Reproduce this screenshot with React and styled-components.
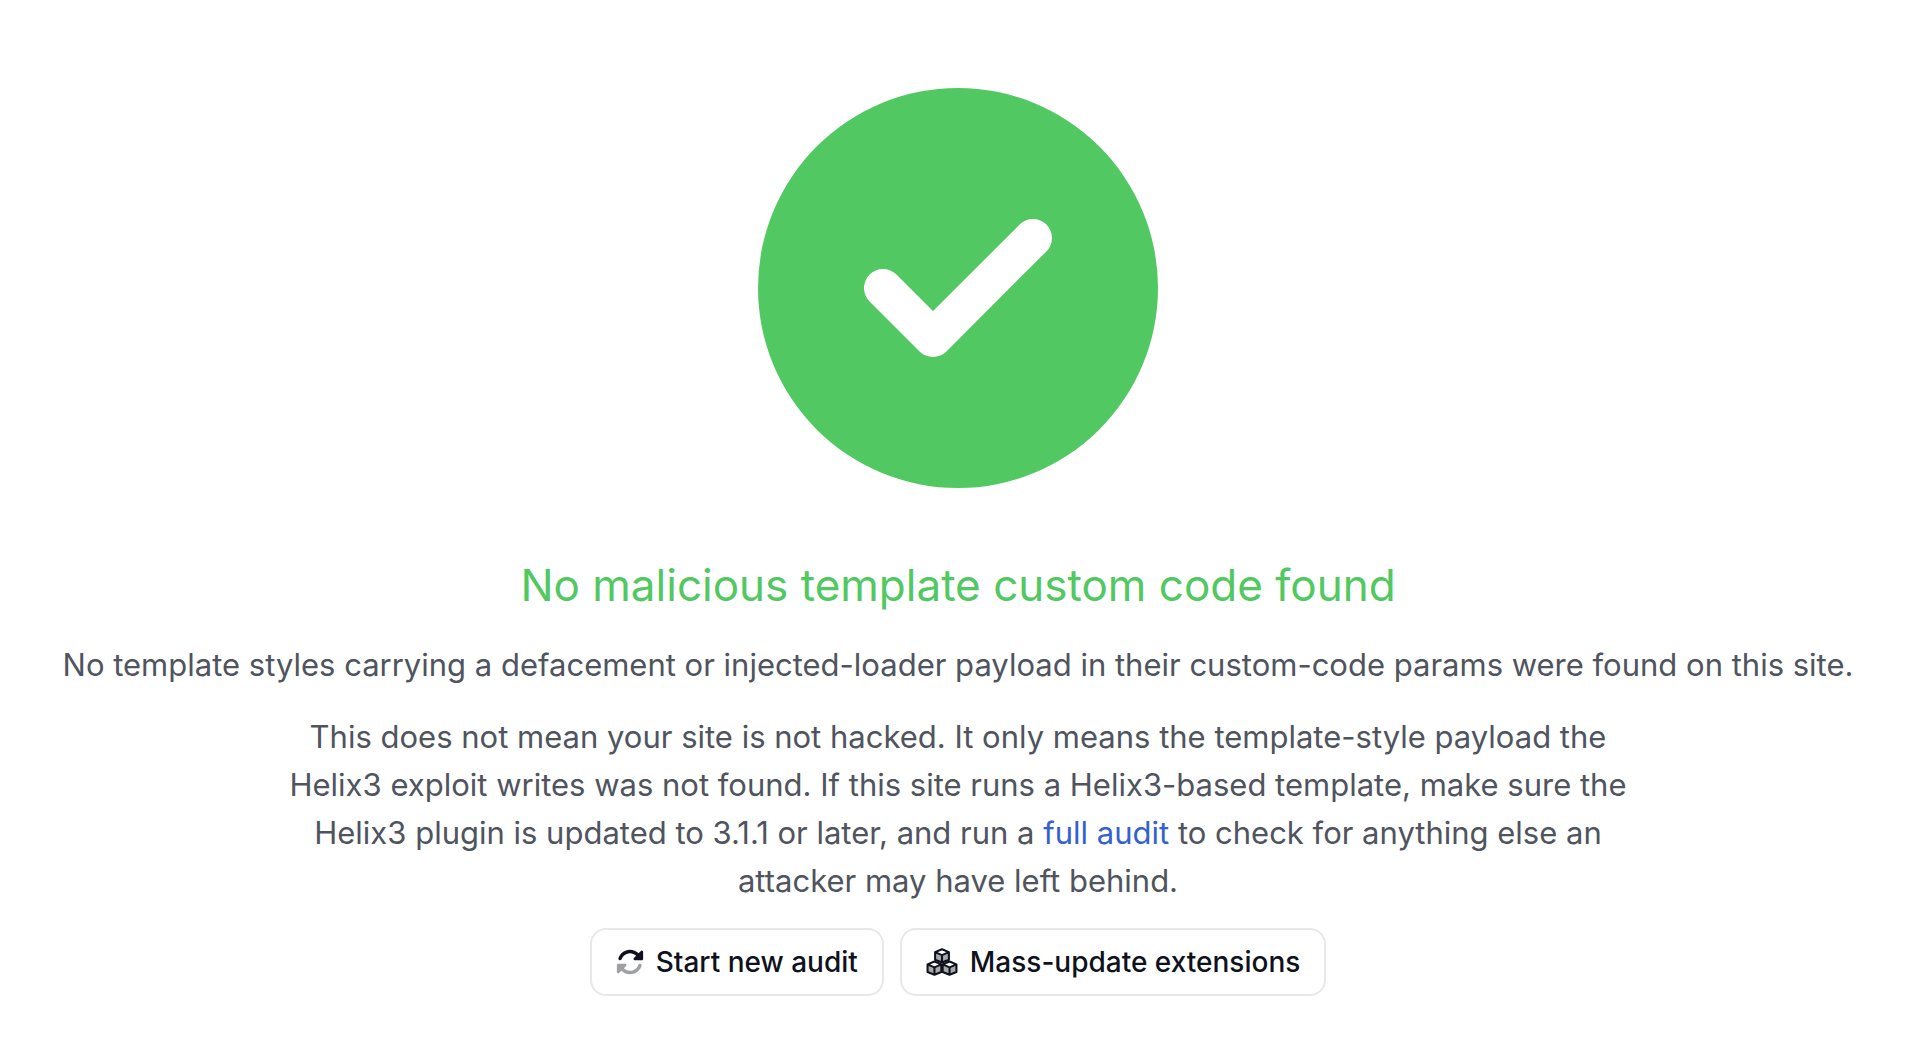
import styled, { createGlobalStyle } from "styled-components";

const COLOR = {
  green: "#52c862",
  text: "#4f545e",
  link: "#3461d1",
  border: "#e8e8ea",
  dark: "#0f121c",
};

const GlobalStyle = createGlobalStyle`
  body {
    margin: 0;
    background: #fff;
    font-family: Inter, "Liberation Sans", sans-serif;
  }
`;

const Page = styled.main`
  padding: 88px 32px 40px 24px;
  display: flex;
  flex-direction: column;
  align-items: center;
  text-align: center;
`;
const StatusIcon = styled.svg`
  width: 400px;
  height: 400px;
  display: block;
`;
const Title = styled.h1`
  margin: 66px 0 0;
  font-size: 44px;
  line-height: 63px;
  font-weight: 400;
  color: ${COLOR.green};
`;
const Text = styled.p`
  margin: 24px 0 0;
  max-width: ${({ $narrow }) => ($narrow ? "1344px" : "none")};
  font-size: 31px;
  line-height: 48px;
  color: ${COLOR.text};
`;
const Link = styled.a`
  color: ${COLOR.link};
  text-decoration: none;
`;
const Actions = styled.div`
  margin-top: 23px;
  display: flex;
  gap: 16px;
`;
const Button = styled.button`
  padding: 0 24px;
  height: 68px;
  display: flex;
  align-items: center;
  gap: 12px;
  border: 2px solid ${COLOR.border};
  border-radius: 16px;
  background: #fff;
  color: ${COLOR.dark};
  font-family: inherit;
  font-size: 28px;
  font-weight: 500;
  cursor: pointer;
`;
const Icon = styled.svg`
  width: ${({ $wide }) => ($wide ? "32px" : "28px")};
  height: 28px;
  flex-shrink: 0;
`;

// centers of the three stacked cubes
const CUBES = [
  [288, 144],
  [150, 368],
  [426, 368],
];

function RotateIcon() {
  return (
    <Icon viewBox="0 0 512 512" fill="currentColor" aria-hidden="true">
      <path d="M142.9 142.9c-17.5 17.5-30.1 38-37.8 59.8c-5.9 16.7-24.2 25.4-40.8 19.5s-25.4-24.2-19.5-40.8C55.6 150.7 73.2 122 97.6 97.6c87.2-87.2 228.3-87.5 315.8-1L455 55c6.9-6.9 17.2-8.9 26.2-5.2s14.8 12.5 14.8 22.2v128c0 13.3-10.7 24-24 24H344c-9.7 0-18.5-5.8-22.2-14.8s-1.7-19.3 5.2-26.2l41.1-41.1c-62.6-61.5-163.1-61.2-225.3 1z" />
      <path
        opacity="0.4"
        d="M16 312c0-13.3 10.7-24 24-24H168c9.7 0 18.5 5.8 22.2 14.8s1.7 19.3-5.2 26.2l-41.1 41.1c62.6 61.5 163.1 61.2 225.3-1c17.5-17.5 30.1-38 37.8-59.8c5.9-16.7 24.2-25.4 40.8-19.5s25.4 24.2 19.5 40.8c-10.8 30.6-28.4 59.3-52.9 83.8c-87.2 87.2-228.3 87.5-315.8 1L57 457c-6.9 6.9-17.2 8.9-26.2 5.2S16 449.7 16 440z"
      />
    </Icon>
  );
}

function CubesIcon() {
  return (
    <Icon $wide viewBox="0 0 576 512" aria-hidden="true">
      {CUBES.map(([x, y]) => (
        <g key={`${x}-${y}`} transform={`translate(${x} ${y})`}>
          <path
            d="M-126 -68L0 -14L126 -68V72L0 122L-126 72Z"
            fill="currentColor"
            opacity="0.36"
          />
          <path
            d="M0 -122L126 -68V72L0 122L-126 72V-68ZM-126 -68L0 -14L126 -68M0 -14V122"
            fill="none"
            stroke="currentColor"
            strokeWidth="38"
            strokeLinejoin="round"
          />
        </g>
      ))}
    </Icon>
  );
}

export default function App() {
  return (
    <Page>
      <GlobalStyle />
      <StatusIcon viewBox="0 0 400 400" aria-hidden="true">
        <circle cx="200" cy="200" r="200" fill={COLOR.green} />
        <path
          d="M125 200L175 250L275 150"
          fill="none"
          stroke="#fff"
          strokeWidth="38"
          strokeLinecap="round"
          strokeLinejoin="round"
        />
      </StatusIcon>
      <Title>No malicious template custom code found</Title>
      <Text>
        No template styles carrying a defacement or injected-loader payload in
        their custom-code params were found on this site.
      </Text>
      <Text $narrow>
        This does not mean your site is not hacked. It only means the
        template-style payload the Helix3 exploit writes was not found. If this
        site runs a Helix3-based template, make sure the Helix3 plugin is
        updated to 3.1.1 or later, and run a{" "}
        <Link href="#audit">full audit</Link> to check for anything else an
        attacker may have left behind.
      </Text>
      <Actions>
        <Button type="button">
          <RotateIcon />
          Start new audit
        </Button>
        <Button type="button">
          <CubesIcon />
          Mass-update extensions
        </Button>
      </Actions>
    </Page>
  );
}
